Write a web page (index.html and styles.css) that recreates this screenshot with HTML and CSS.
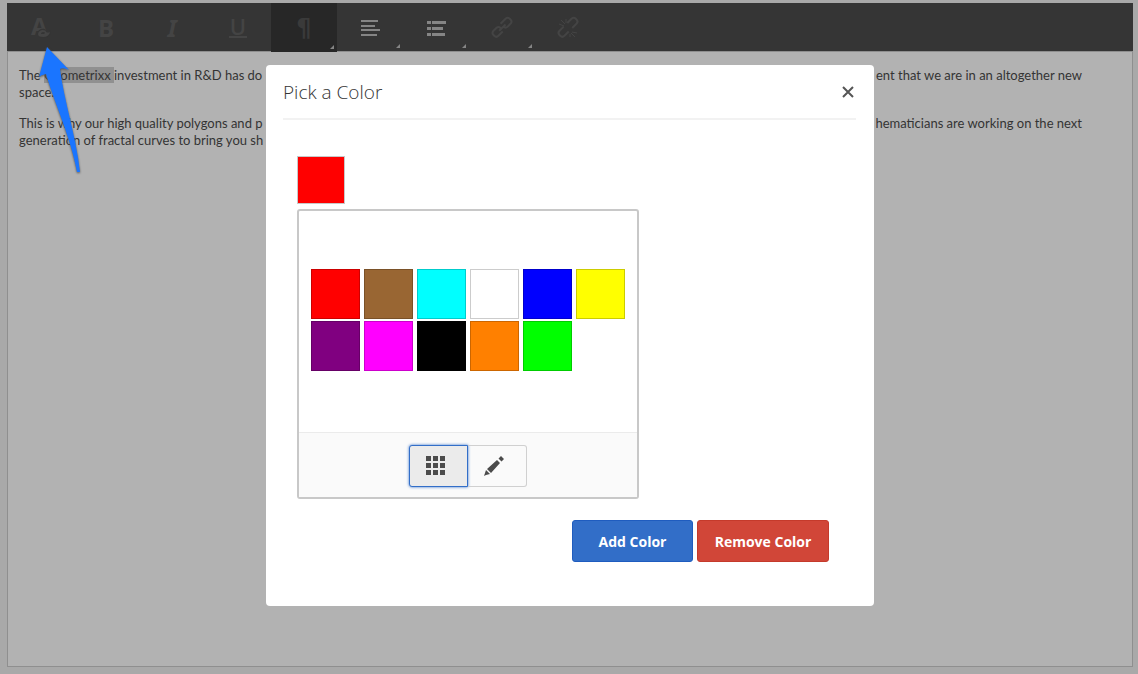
FILE: index.html
```html
<!DOCTYPE html>
<html lang="en">
<head>
<meta charset="utf-8">
<title>Pick a Color</title>
<link rel="stylesheet" href="styles.css">
</head>
<body>
<main class="editor">
  <div class="toolbar" role="toolbar" aria-label="Formatting">
    <button class="tool" aria-label="Text color"><svg width="28" height="28" viewBox="0 0 28 28"><text class="glyph-a" x="5" y="22">A</text><path class="cut" d="M11 21C12 15 18 15 20 17Q22 19 25 17Q25 25 17 25Q12 25 11 21Z"/><path fill="currentColor" d="M12 21Q13 17 17 17Q20 17 20 19Q22 20 24 19Q23 24 17 24Q12 24 12 21Z"/><path class="cut" d="M15 21q0-2 2-2t2 1l-1 1z"/></svg></button>
    <button class="tool bold" aria-label="Bold">B</button>
    <button class="tool italic" aria-label="Italic">I</button>
    <button class="tool" aria-label="Underline"><span class="underline">U</span></button>
    <button class="tool active more" aria-label="Paragraph format"><span class="pilcrow">¶</span></button>
    <button class="tool on more" aria-label="Align"><svg width="20" height="20" viewBox="0 0 20 20"><path stroke="currentColor" stroke-width="2" d="M1 4h17M1 9h14M1 13h19M1 18h16"/></svg></button>
    <button class="tool on more" aria-label="Lists"><svg width="20" height="20" viewBox="0 0 20 20"><path fill="currentColor" d="M1 4h4v3H1zM6 4h14v3H6zM1 10h4v3H1zM6 10h11v3H6zM1 16h4v3H1zM6 16h13v3H6z"/></svg></button>
    <button class="tool more" aria-label="Link"><svg width="20" height="20" viewBox="0 0 20 20"><g transform="rotate(-45 10 11)"><path class="line" d="M8 14H2Q-1 14-1 11V10Q-1 7 2 7H6Q9 7 9 10M12 7H19Q22 7 22 10V11Q22 14 19 14H15Q12 14 12 11M6 11h9"/></g></svg></button>
    <button class="tool" aria-label="Unlink"><svg width="20" height="20" viewBox="0 0 20 20"><g transform="rotate(-45 10 11)"><path class="line" d="M8 7H2Q-1 7-1 10V11Q-1 14 2 14H8M13 7H19Q22 7 22 10V11Q22 14 19 14H13"/></g><path class="spark" d="M1 7l5 2M3 3l4 4M8 2v4M14 15l5 1M13 16l4 4M12 17v3"/></svg></button>
  </div>
  <article class="content">
    <p><span class="line-row"><span>The <mark>Geometrixx </mark>investment in R&amp;D has do</span><span>ent that we are in an altogether new</span></span>space.</p>
    <p><span class="line-row"><span>This is why our high quality polygons and p</span><span>hematicians are working on the next</span></span>generation of fractal curves to bring you sh</p>
  </article>
</main>
<svg class="pointer" width="60" height="140" viewBox="0 0 60 140"><path d="M17 7L39 30Q33 27 30 29C34 61 46 96 50 132H47C41 98 24 62 16 34Q11 35 9 37Z"/></svg>
<div class="overlay">
  <section class="modal" role="dialog" aria-labelledby="title">
    <header class="modal-head"><h2 id="title">Pick a Color</h2><button class="close" aria-label="Close"><svg width="12" height="12" viewBox="0 0 12 12"><path stroke="currentColor" stroke-width="2" d="M1 1l10 10M11 1L1 11"/></svg></button></header>
    <div class="modal-body">
      <button class="current" aria-label="Current color"></button>
      <div class="picker">
        <div class="swatches">
          <button class="swatch red" aria-label="Red"></button>
          <button class="swatch brown" aria-label="Brown"></button>
          <button class="swatch cyan" aria-label="Cyan"></button>
          <button class="swatch white" aria-label="White"></button>
          <button class="swatch blue" aria-label="Blue"></button>
          <button class="swatch yellow" aria-label="Yellow"></button>
          <button class="swatch purple" aria-label="Purple"></button>
          <button class="swatch magenta" aria-label="Magenta"></button>
          <button class="swatch black" aria-label="Black"></button>
          <button class="swatch orange" aria-label="Orange"></button>
          <button class="swatch green" aria-label="Green"></button>
        </div>
        <div class="modes">
          <button class="mode selected" aria-label="Palette"><svg width="20" height="20" viewBox="0 0 20 20"><path fill="currentColor" d="M0 0h5v5H0zM7 0h5v5H7zM14 0h5v5h-5zM0 7h5v5H0zM7 7h5v5H7zM14 7h5v5h-5zM0 14h5v5H0zM7 14h5v5H7zM14 14h5v5h-5z"/></svg></button>
          <button class="mode" aria-label="Edit"><svg width="20" height="20" viewBox="0 0 20 20"><path fill="currentColor" d="M0 20L2 14L6 18L2 19ZM3 13L13 4L16 7L7 17ZM14.500 2.500L17 0L20 3L17.500 5.500Z"/></svg></button>
        </div>
      </div>
      <div class="actions"><button class="btn add">Add Color</button><button class="btn remove">Remove Color</button></div>
    </div>
  </section>
</div>
</body>
</html>
```
FILE: styles.css
```css
* { box-sizing: border-box; }
body { margin: 0; background: #a9a9a9; color: #343434; font-family: "Open Sans", sans-serif; font-size: 13px; line-height: 17px; }
button { margin: 0; padding: 0; border: 0; background: none; color: inherit; font-family: inherit; }
svg { display: block; fill: none; overflow: visible; }
.editor { display: flex; flex-direction: column; min-height: 100vh; padding: 3px 5px 7px 7px; }
.toolbar { display: flex; height: 48px; background: #353535; }
.tool { position: relative; display: flex; align-items: center; justify-content: center; width: 66px; height: 48px; color: #444; font-size: 24px; }
.tool.on { color: #858585; }
.tool.active { height: 49px; background: #272727; color: #3a3a3a; }
.more::after { content: ""; position: absolute; right: 3px; bottom: 3px; border: solid transparent; border-width: 2px; border-right-color: #858585; border-bottom-color: #858585; }
.bold { font-weight: 700; }
.italic { font: italic 700 24px "Noto Sans", sans-serif; }
.underline { padding: 0 1px; border-bottom: 2px solid; font-size: 22px; font-weight: 600; line-height: 19px; }
.pilcrow { font: 700 24px "DejaVu Sans", sans-serif; }
.glyph-a { fill: currentColor; font: 700 24px "Open Sans", sans-serif; }
.cut { fill: #353535; }
.line { stroke: currentColor; stroke-width: 2; }
.spark { stroke: currentColor; stroke-width: 1; }
.content { flex: 1; padding: 15px 50px 0 11px; border: 1px solid #8f8f8f; background: #b2b2b2; font-family: Lato, sans-serif; }
.content p { margin: 0 0 14px; }
.line-row { display: flex; justify-content: space-between; white-space: pre; }
mark { background: #909090; color: inherit; }
.pointer { position: absolute; top: 40px; left: 30px; fill: #1a75ff; filter: drop-shadow(0 1px 1px #555); }
.overlay { position: fixed; inset: 0; display: flex; align-items: flex-start; justify-content: center; padding: 65px 0 0 2px; }
.modal { width: 608px; max-width: 100%; padding-bottom: 44px; border-radius: 4px; background: #fff; }
.modal-head { display: flex; align-items: center; justify-content: space-between; height: 55px; margin: 0 18px 0 17px; border-bottom: 2px solid #f2f2f2; }
h2 { margin: 0; font-size: 19px; font-weight: 300; line-height: 24px; }
.close { padding: 2px; color: #555; }
.modal-body { padding: 36px 45px 0 31px; }
.current { display: block; width: 48px; height: 48px; border: 1px solid #c8c8c8; background: #f00; }
.picker { width: 342px; margin-top: 5px; border: 2px solid #c8c8c8; border-radius: 3px; }
.swatches { display: grid; grid-template-columns: repeat(6, 49px); grid-auto-rows: 50px; gap: 2px 4px; padding: 58px 12px 61px; }
.swatch { border: 1px solid rgb(0 0 0 / 20%); }
.red { background: #f00; }
.brown { background: #963; }
.cyan { background: #0ff; }
.white { background: #fff; }
.blue { background: #00f; }
.yellow { background: #ff0; }
.purple { background: #800080; }
.magenta { background: #f0f; }
.black { background: #000; }
.orange { background: #ff8000; }
.green { background: #0f0; }
.modes { display: flex; justify-content: center; padding: 12px 0 10px; border-top: 1px solid #ebebeb; background: #fafafa; }
.mode { display: flex; align-items: center; width: 59px; height: 42px; padding-left: 16px; border: 1px solid #d0d0d0; border-left: 0; border-radius: 0 3px 3px 0; color: #4b4b4b; }
.mode.selected { border: 1px solid #326ec8; border-radius: 3px 0 0 3px; background: #ebebeb; box-shadow: 0 0 3px #326ec8; }
.actions { display: flex; justify-content: flex-end; gap: 4px; margin-top: 21px; }
.btn { min-width: 121px; height: 42px; padding: 0 16px; border: 1px solid #1f5cbf; border-radius: 3px; background: #326ec8; color: #fff; font-size: 14px; font-weight: 700; }
.remove { min-width: 132px; border-color: #c53a2b; background: #d14638; }
```
